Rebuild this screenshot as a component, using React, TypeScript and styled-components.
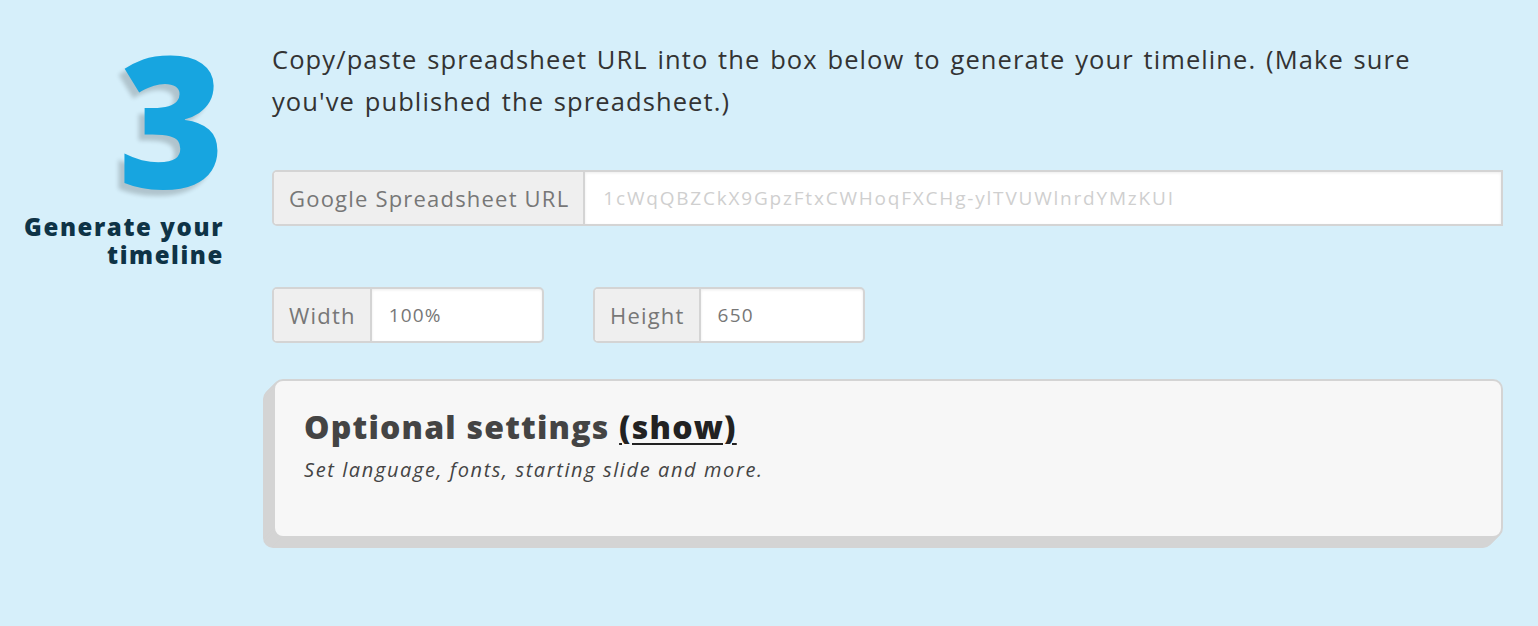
import React from "react";
import styled, { createGlobalStyle } from "styled-components";

const Global = createGlobalStyle`
  html, body { margin: 0; padding: 0; }
  body { background: #d6effa; font-family: "Open Sans", "Liberation Sans", sans-serif; }
`;

const Page = styled.div`
  min-height: 626px;
  background: #d6effa;
  box-sizing: border-box;
  padding: 38px 35px 0 0;
  display: grid;
  grid-template-columns: 224px 1fr;
  column-gap: 48px;
`;

const StepCol = styled.div`
  display: flex;
  flex-direction: column;
  align-items: flex-end;
  text-align: right;
`;

const StepNumber = styled.div`
  font-family: "Open Sans", sans-serif;
  font-weight: 800;
  font-size: 182px;
  line-height: 1;
  margin-top: -12px;
  margin-right: 3px;
  color: #17a5e0;
  text-shadow: -6px 6px 4px rgba(0, 0, 0, 0.18);
  letter-spacing: -4px;
`;

const StepLabel = styled.div`
  font-family: "Open Sans", sans-serif;
  font-weight: 800;
  font-size: 24px;
  letter-spacing: 1.6px;
  line-height: 28px;
  color: #0e3346;
  margin-top: 5px;
`;

const Content = styled.div`
  display: flex;
  flex-direction: column;
`;

const Intro = styled.p`
  margin: 0;
  font-size: 25.5px;
  letter-spacing: 1.1px;
  word-spacing: 2px;
  line-height: 42px;
  color: #333;
`;

const InputGroup = styled.div<{ $w?: string; $squareRight?: boolean }>`
  display: flex;
  width: ${(p) => p.$w || "100%"};
  height: 56px;
  box-sizing: border-box;
  border: 2px solid #d4d4d4;
  border-radius: ${(p) => (p.$squareRight ? "5px 0 0 5px" : "5px")};
  background: #fff;
  overflow: hidden;
`;

const Addon = styled.div`
  display: flex;
  align-items: center;
  padding: 0 14px 0 15px;
  background: #efefef;
  border-right: 2px solid #d4d4d4;
  color: #777;
  font-size: 22px;
  letter-spacing: 1.2px;
  white-space: nowrap;
`;

const Field = styled.div<{ $placeholder?: boolean }>`
  flex: 1;
  display: flex;
  align-items: center;
  padding: 0 16px 0 ${(p) => (p.$placeholder ? "18px" : "17px")};
  font-size: 19px;
  letter-spacing: ${(p) => (p.$placeholder ? "1.8px" : "1.2px")};
  color: ${(p) => (p.$placeholder ? "#cfcfcf" : "#777")};
  box-shadow: inset 0 1px 3px rgba(0, 0, 0, 0.08);
  white-space: nowrap;
  overflow: hidden;
`;

const UrlRow = styled.div`
  margin-top: 48px;
`;

const SizeRow = styled.div`
  margin-top: 61px;
  display: flex;
  gap: 49px;
`;

const Card = styled.div`
  margin-top: 36px;
  margin-left: 1px;
  height: 159px;
  box-sizing: border-box;
  background: #f7f7f7;
  border: 2px solid #d4d4d4;
  border-radius: 10px;
  padding: 26px 29px;
  box-shadow: -1px 1px 0 #d4d4d4, -2px 2px 0 #d4d4d4, -3px 3px 0 #d4d4d4,
    -4px 4px 0 #d4d4d4, -5px 5px 0 #d4d4d4, -6px 6px 0 #d4d4d4,
    -7px 7px 0 #d4d4d4, -8px 8px 0 #d4d4d4, -9px 9px 0 #d4d4d4,
    -10px 10px 0 #d4d4d4;
`;

const CardTitle = styled.h3`
  margin: 0;
  font-size: 32px;
  letter-spacing: 1.2px;
  line-height: 40px;
  font-weight: 800;
  color: #444;
`;

const ShowLink = styled.a`
  color: #222;
  text-decoration: underline;
  text-decoration-thickness: 2px;
  text-underline-offset: 4px;
  cursor: pointer;
`;

const CardNote = styled.p`
  margin: 9px 0 0;
  font-style: italic;
  font-size: 20px;
  letter-spacing: 1.6px;
  color: #444;
`;

export default function App() {
  return (
    <>
      <Global />
      <Page>
        <StepCol>
          <StepNumber>3</StepNumber>
          <StepLabel>
            Generate your
            <br />
            timeline
          </StepLabel>
        </StepCol>
        <Content>
          <Intro>
            Copy/paste spreadsheet URL into the box below to generate your timeline. (Make sure
            you've published the spreadsheet.)
          </Intro>
          <UrlRow>
            <InputGroup $squareRight>
              <Addon>Google Spreadsheet URL</Addon>
              <Field $placeholder>1cWqQBZCkX9GpzFtxCWHoqFXCHg-ylTVUWlnrdYMzKUI</Field>
            </InputGroup>
          </UrlRow>
          <SizeRow>
            <InputGroup $w="272px">
              <Addon>Width</Addon>
              <Field>100%</Field>
            </InputGroup>
            <InputGroup $w="272px">
              <Addon>Height</Addon>
              <Field>650</Field>
            </InputGroup>
          </SizeRow>
          <Card>
            <CardTitle>
              Optional settings <ShowLink>(show)</ShowLink>
            </CardTitle>
            <CardNote>Set language, fonts, starting slide and more.</CardNote>
          </Card>
        </Content>
      </Page>
    </>
  );
}
